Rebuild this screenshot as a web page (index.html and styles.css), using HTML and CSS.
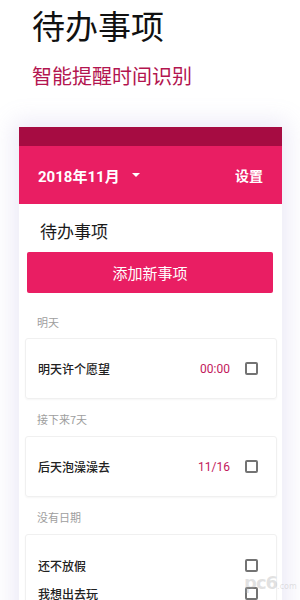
FILE: index.html
```html
<!DOCTYPE html>
<html lang="zh">
<head>
<meta charset="utf-8">
<link rel="stylesheet" href="styles.css">
</head>
<body>
<div class="page">
  <div class="hero">
    <h1 class="title">待办事项</h1>
    <p class="subtitle">智能提醒时间识别</p>
  </div>
  <div class="card">
    <div class="strip"></div>
    <div class="appbar">
      <div class="month">2018年11月<span class="caret"></span></div>
      <div class="settings">设置</div>
    </div>
    <div class="content">
      <div class="heading">待办事项</div>
      <div class="add-btn">添加新事项</div>
      <div class="label first">明天</div>
      <div class="item">
        <span class="item-text">明天许个愿望</span>
        <span class="item-time">00:00</span>
        <span class="check"></span>
      </div>
      <div class="label">接下来7天</div>
      <div class="item">
        <span class="item-text">后天泡澡澡去</span>
        <span class="item-time">11/16</span>
        <span class="check"></span>
      </div>
      <div class="label">没有日期</div>
      <div class="item multi">
        <div class="row">
          <span class="item-text">还不放假</span>
          <span class="check"></span>
        </div>
        <div class="row">
          <span class="item-text">我想出去玩</span>
          <span class="check"></span>
        </div>
      </div>
    </div>
  </div>
  <div class="watermark">pc6<span class="wm-small">.com</span></div>
</div>
</body>
</html>
```

FILE: styles.css
```css
html, body {
  margin: 0;
  padding: 0;
  background: #ffffff;
}
body {
  font-family: Roboto, "Noto Sans CJK SC", sans-serif;
  width: 300px;
  height: 600px;
  overflow: hidden;
}
.page {
  position: relative;
  height: 600px;
  overflow: hidden;
}
.hero {
  padding: 5px 0 0 32px;
}
.title {
  margin: 0;
  font-family: "Noto Sans CJK SC", sans-serif;
  font-weight: 400;
  font-size: 33px;
  line-height: 40px;
  color: #111111;
}
.subtitle {
  margin: 19px 0 0 0;
  font-family: "Noto Sans CJK SC", sans-serif;
  font-size: 20px;
  line-height: 24px;
  color: #b3154f;
}
.card {
  margin: 39px 18px 0 19px;
  background: #ffffff;
  box-shadow: 0 0 22px 6px rgba(150, 140, 210, 0.18);
}
.strip {
  height: 19px;
  background: #a60c42;
}
.appbar {
  height: 58px;
  background: #e91e63;
  display: flex;
  align-items: center;
  justify-content: space-between;
  padding: 0 19px;
  color: #ffffff;
  font-weight: 700;
  font-size: 15px;
}
.month {
  display: flex;
  align-items: center;
}
.caret {
  margin-left: 12px;
  width: 0;
  height: 0;
  border-left: 4px solid transparent;
  border-right: 4px solid transparent;
  border-top: 4px solid #ffffff;
}
.settings {
  font-size: 14px;
}
.content {
  padding: 16px 5px 20px 6px;
}
.heading {
  padding-left: 15px;
  font-family: "Noto Sans CJK SC", sans-serif;
  font-size: 17px;
  line-height: 22px;
  color: #1a1a1a;
}
.add-btn {
  margin: 10px 4px 0 2px;
  height: 41px;
  border-radius: 2px;
  background: #e91e63;
  color: #ffffff;
  font-family: "Noto Sans CJK SC", sans-serif;
  font-size: 15px;
  display: flex;
  align-items: center;
  justify-content: center;
}
.label {
  margin: 11px 0 8px 0;
  padding-left: 12px;
  font-family: "Noto Sans CJK SC", sans-serif;
  font-size: 11px;
  line-height: 18px;
  color: #9e9e9e;
}
.label.first {
  margin-top: 20px;
  margin-bottom: 7px;
}
.item {
  height: 61px;
  box-sizing: border-box;
  border: 1px solid #f0f0f0;
  border-radius: 3px;
  box-shadow: 0 1px 2px rgba(0, 0, 0, 0.04);
  display: flex;
  align-items: center;
  padding: 0 18px 0 12px;
  font-family: "Noto Sans CJK SC", sans-serif;
  font-size: 12px;
  font-weight: 500;
  color: #212121;
}
.item-text {
  flex: 1;
}
.item-time {
  color: #c2185b;
  font-family: Roboto, sans-serif;
  font-weight: 400;
  font-size: 12px;
  margin-right: 15px;
}
.check {
  width: 9px;
  height: 9px;
  border: 2px solid #737373;
  border-radius: 2px;
  flex: none;
}
.item.multi {
  height: 80px;
  flex-direction: column;
  align-items: stretch;
  padding-top: 16px;
}
.row {
  display: flex;
  align-items: center;
  height: 28px;
}
.watermark {
  position: absolute;
  left: 244px;
  top: 572px;
  font-family: "DejaVu Sans", sans-serif;
  font-size: 18px;
  font-weight: 700;
  color: rgba(170, 170, 170, 0.35);
  letter-spacing: -1px;
}
.wm-small {
  font-size: 8px;
  letter-spacing: 0;
  font-weight: 400;
}
```
